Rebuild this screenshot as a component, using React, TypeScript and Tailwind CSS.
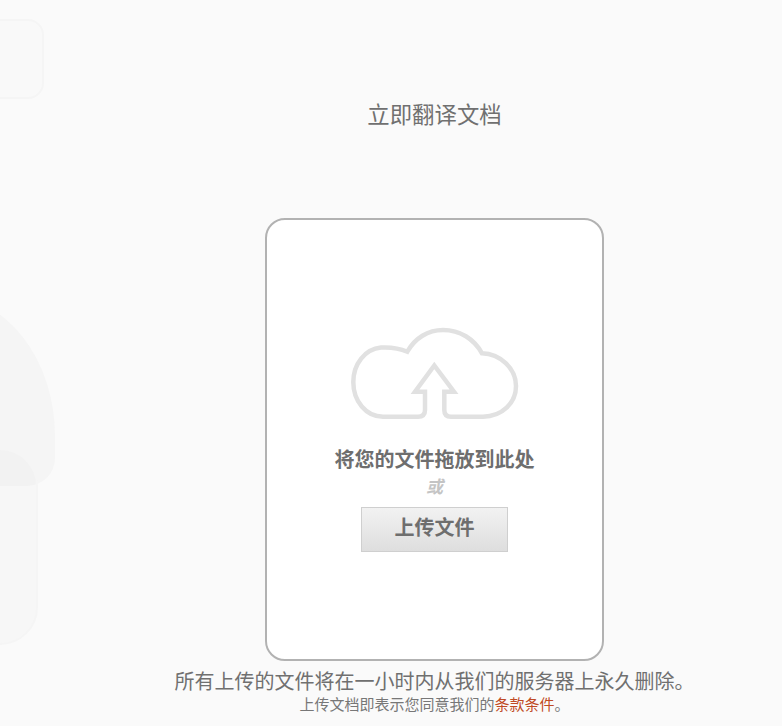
// Document translate upload page
const font = "[font-family:'Liberation_Sans','Noto_Sans_CJK_SC',sans-serif]";

function CloudUpload() {
  return (
    <svg width="170" height="95" viewBox="0 0 170 95" fill="none" stroke="#e1e1e1" strokeWidth="4.5" strokeLinejoin="miter">
      <path d="M75 65.7H65L84.3 39.5L104 65.7H94.3V84Q94.3 90.7 101 90.7H133C152 90.7 166 77 166 60C166 42 150 28 132 27.3C124 13 110 4 93 4C78 4 65 12 57.3 25.7C50 22.5 40 21 31 21.5C15 23 3.3 38 3.3 56C3.3 75 16 90.7 33 90.7H68Q75 90.7 75 84Z" />
    </svg>
  );
}

export default function App() {
  return (
    <div className={`relative h-[726px] w-full overflow-hidden bg-[#fafafa] pl-[87px] ${font}`}>
      {/* faded shapes behind the page */}
      <div className="absolute left-[-40px] top-[19px] h-[80px] w-[84px] rounded-[16px] border-2 border-[#f5f5f5] bg-[#f9f9f9]" />
      <div className="absolute left-[-110px] top-[296px] h-[190px] w-[165px] rounded-[0_110px_28px_0/0_140px_28px_0] bg-[#f5f5f5]" />
      <div className="absolute left-[-60px] top-[448px] h-[197px] w-[98px] rounded-[38px] border-2 border-[#f5f5f5] bg-[#000000]/[0.012]" />

      <div className="relative flex flex-col items-center">
        <h1 className="mt-[100px] text-[22.4px] font-normal leading-[32px] text-[#707070]">立即翻译文档</h1>

        <div className="mt-[86px] flex h-[443px] w-[339px] flex-col items-center rounded-[20px] border-2 border-[#b2b2b2] bg-white pt-[106px]">
          <CloudUpload />
          <p className="mt-[24px] text-[20px] font-bold leading-[30px] text-[#6e6e6e]">将您的文件拖放到此处</p>
          <p className="mt-[1px] text-[17px] font-bold italic leading-[24px] text-[#c4c4c4]">或</p>
          <button
            type="button"
            className="mt-[7px] h-[45px] w-[147px] border border-[#cfcfcf] bg-gradient-to-b from-[#f2f2f2] to-[#dedede] pb-[3px] text-[20px] font-bold text-[#6e6e6e]"
          >
            上传文件
          </button>
        </div>

        <p className="mt-[6px] text-[20px] leading-[30px] whitespace-nowrap text-[#707070]">所有上传的文件将在一小时内从我们的服务器上永久删除。</p>
        <p className="text-[15px] leading-[16px] whitespace-nowrap text-[#777777]">
          上传文档即表示您同意我们的<a className="text-[#c04a24]">条款条件</a>。
        </p>
      </div>
    </div>
  );
}
